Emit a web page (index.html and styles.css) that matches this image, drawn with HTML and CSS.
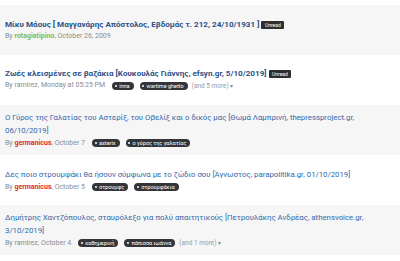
FILE: index.html
```html
<!DOCTYPE html>
<html lang="el">
<head>
<meta charset="utf-8">
<title>Threads</title>
<link rel="stylesheet" href="styles.css">
</head>
<body>
<div class="list">
  <div class="item">
    <div class="title unread"><a>Μίκυ Μάους [ Μαγγανάρης Απόστολος, Εβδομάς τ. 212, 24/10/1931 ]</a> <span class="badge">Unread</span></div>
    <div class="meta">By <span class="user green">rotagiatipino</span>, October 26, 2009</div>
  </div>
  <div class="item">
    <div class="title unread"><a>Ζωές κλεισμένες σε βαζάκια [Κουκουλάς Γιάννης, efsyn.gr, 5/10/2019]</a> <span class="badge">Unread</span></div>
    <div class="meta">By ramirez, Monday at 05:25 PM<span class="tags"><span class="tag">inna</span><span class="tag">wartime ghetto</span><span class="more">(and 5 more) <span class="caret">▾</span></span></span></div>
  </div>
  <div class="item">
    <div class="title"><a>Ο Γύρος της Γαλατίας του Αστερίξ, του Οβελίξ και ο δικός μας [Θωμά Λαμπρινή, thepressproject.gr, 06/10/2019]</a></div>
    <div class="meta">By <span class="user red">germanicus</span>, October 7<span class="tags"><span class="tag">asterix</span><span class="tag">ο γύρος της γαλατίας</span></span></div>
  </div>
  <div class="item">
    <div class="title"><a>Δες ποιο στρουμφάκι θα ήσουν σύμφωνα με το ζώδιο σου [Άγνωστος, parapolitika.gr, 01/10/2019]</a></div>
    <div class="meta">By <span class="user red">germanicus</span>, October 5<span class="tags"><span class="tag">στρουμφς</span><span class="tag">στρουμφάκια</span></span></div>
  </div>
  <div class="item">
    <div class="title"><a>Δημήτρης Χαντζόπουλος, σταυρόλεξο για πολύ απαιτητικούς [Πετρουλάκης Ανδρέας, athensvoice.gr, 3/10/2019]</a></div>
    <div class="meta">By ramirez, October 4<span class="tags"><span class="tag">καθημερινή</span><span class="tag">πάπισσα ιωάννα</span><span class="more">(and 1 more) <span class="caret">▾</span></span></span></div>
  </div>
</div>
</body>
</html>
```
FILE: styles.css
```css
html, body {
  margin: 0;
  padding: 0;
  background: #ffffff;
}
body {
  font-family: Roboto, "Noto Sans", "Liberation Sans", sans-serif;
}
.list {
  padding-top: 5px;
}
.item {
  min-height: 50px;
  box-sizing: border-box;
  padding: 6px 5px;
  display: flex;
  flex-direction: column;
  justify-content: center;
  background: #ffffff;
}
.item:nth-child(odd) {
  background: #f6f6f6;
}
.title {
  font-size: 7.8px;
  line-height: 13px;
  color: #2f6aa8;
}
.title a {
  color: #3468aa;
}
.title.unread {
  font-size: 8.1px;
  line-height: 11px;
}
.title.unread a {
  font-weight: 700;
  color: #2b5288;
}
.badge {
  display: inline-block;
  vertical-align: 0;
  background: #2e2e2e;
  color: #ffffff;
  font-size: 5px;
  line-height: 8px;
  height: 8px;
  padding: 0 3.5px;
  border-radius: 1px;
  font-weight: 400;
}
.meta {
  font-size: 7px;
  line-height: 12px;
  color: #8c8c8c;
  white-space: nowrap;
}
.user {
  font-weight: 700;
}
.user.green {
  color: #86bc3a;
}
.user.red {
  color: #e5282b;
}
.tags {
  display: inline-flex;
  align-items: center;
  gap: 6px;
  margin-left: 7px;
  vertical-align: middle;
  height: 12px;
}
.tag {
  position: relative;
  display: inline-block;
  background: #333538;
  color: #ffffff;
  font-size: 5.5px;
  line-height: 8px;
  height: 8px;
  padding: 0 4px 0 7px;
  border-radius: 4px;
}
.tag::before {
  content: "";
  position: absolute;
  left: 2.5px;
  top: 3px;
  width: 2px;
  height: 2px;
  border-radius: 50%;
  background: #ffffff;
}
.more {
  color: #9a9a9a;
  font-size: 6.5px;
  margin-left: -2px;
}
.caret {
  font-size: 6px;
  color: #8c8c8c;
}
```
